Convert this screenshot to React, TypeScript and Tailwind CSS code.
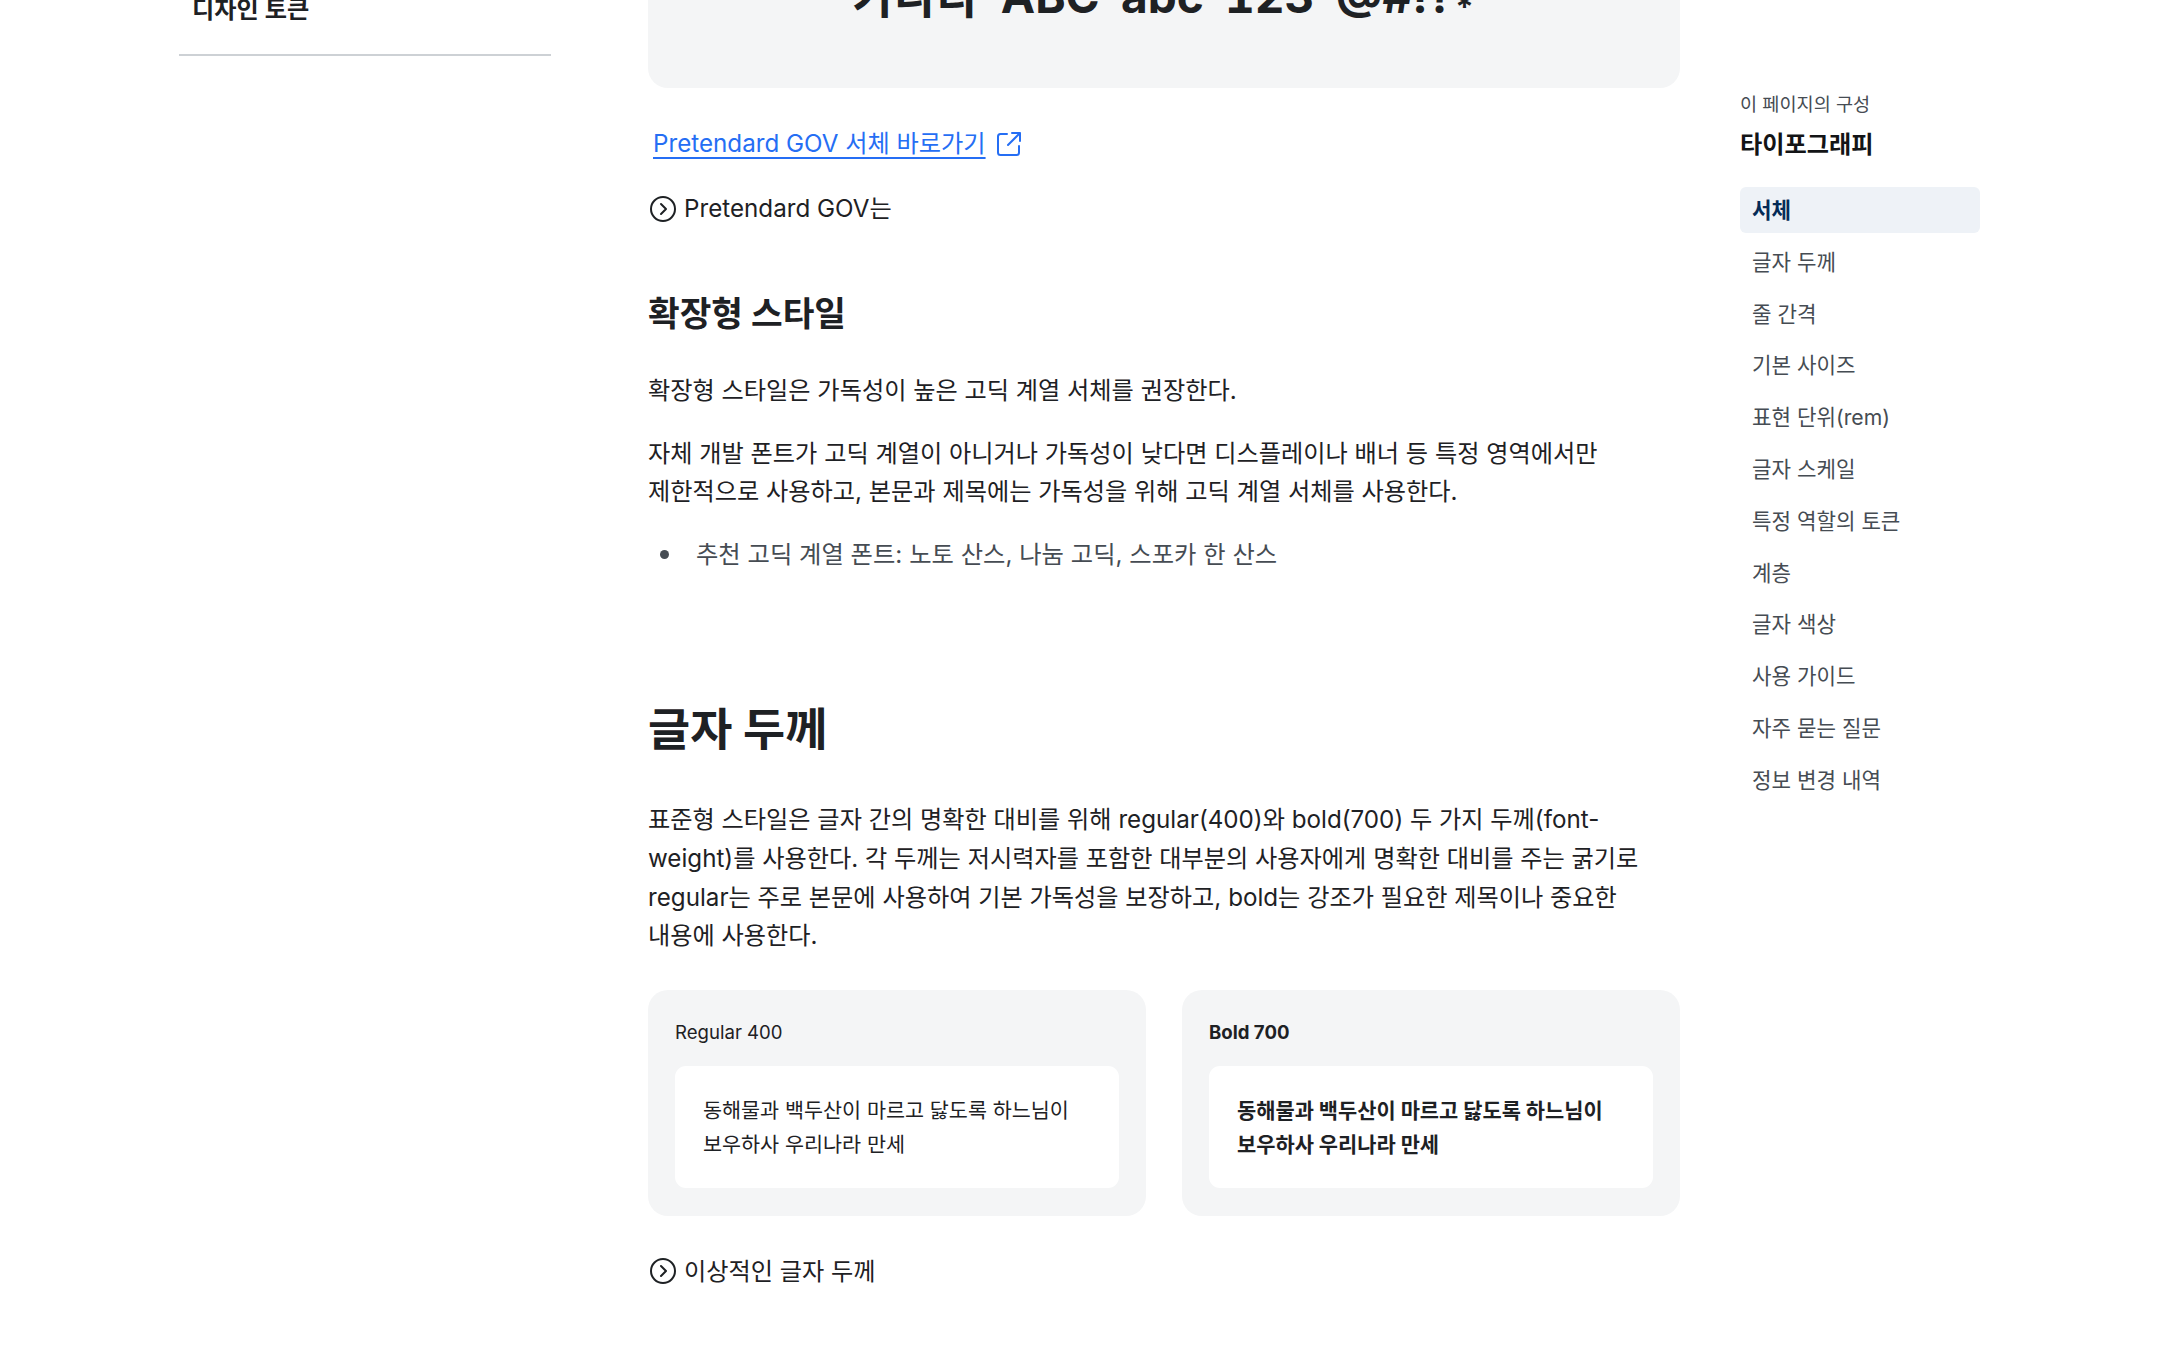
const TOC = ['글자 두께', '줄 간격', '기본 사이즈', '표현 단위(rem)', '글자 스케일', '특정 역할의 토큰', '계층', '글자 색상', '사용 가이드', '자주 묻는 질문', '정보 변경 내역']

const FONT = "font-['Inter','Noto_Sans_CJK_KR',sans-serif]"

function CircleChevron() {
  return (
    <svg width="28" height="28" viewBox="0 0 28 28" fill="none" className="shrink-0">
      <circle cx="14" cy="14" r="12" stroke="#1e2124" strokeWidth="2" />
      <path d="M12 9l5 5-5 5" stroke="#1e2124" strokeWidth="2" strokeLinecap="round" strokeLinejoin="round" />
    </svg>
  )
}

function Disclosure({ label }: { label: string }) {
  return (
    <div className="flex items-center gap-[7px] pl-[1px] h-[39px] text-[24.2px] text-[#1e2124]">
      <CircleChevron />
      <span className="pt-[2px]">{label}</span>
    </div>
  )
}

function WeightCard({ title, bold }: { title: string; bold?: boolean }) {
  return (
    <div className="flex-1 rounded-[20px] bg-[#f4f5f6] p-[27px] pb-[28px]">
      <div className={`text-[18.6px] leading-[30px] h-[49px] text-[#1e2124] ${bold ? 'font-bold' : ''}`}>{title}</div>
      <div className={`rounded-[11px] bg-white px-[28px] pt-[28px] pb-[26px] leading-[34px] text-[#1e2124] break-keep ${bold ? 'text-[20.9px] font-bold' : 'text-[20.7px]'}`}>
        동해물과 백두산이 마르고 닳도록 하느님이 보우하사 우리나라 만세
      </div>
    </div>
  )
}

export default function App() {
  return (
    <div className={`h-[1350px] overflow-hidden bg-white ${FONT}`}>
      <div className="flex -mt-[20px]">
        {/* left nav */}
        <aside className="ml-[179px] w-[372px] shrink-0">
          <div className="pl-[13px] pt-[12px] pb-[17px] h-[76px] border-b-2 border-[#cdd1d5] text-[24.2px] leading-[36px] font-semibold text-[#1e2124]">
            디자인 토큰
          </div>
        </aside>

        {/* main */}
        <main className="ml-[97px] w-[1032px] shrink-0">
          <div className="h-[118px] rounded-b-[20px] bg-[#f4f5f6] text-center text-[46px] leading-[52px] font-bold text-[#1e2124] tabular-nums -mt-[10px] [word-spacing:9px]">
            가나다 ABC abc 123 @#!?<span className="align-[-6px] text-[34px] leading-none">*</span>
          </div>

          <div className="mt-[38px] flex items-center pl-[5px] h-[36px] text-[24.2px]">
            <a className="text-[#256ef4] underline underline-offset-[5px] decoration-[2px]">Pretendard GOV 서체 바로가기</a>
            <svg width="28" height="28" viewBox="0 0 28 28" fill="none" stroke="#256ef4" strokeWidth="2" className="ml-[9px]" strokeLinecap="round" strokeLinejoin="round">
              <path d="M12 4H5.5A2.5 2.5 0 0 0 3 6.5v16A2.5 2.5 0 0 0 5.5 25h16a2.5 2.5 0 0 0 2.5-2.5V16" />
              <path d="M17 3h8v8M25 3L13 15" />
            </svg>
          </div>

          <div className="mt-[27px]"><Disclosure label="Pretendard GOV는" /></div>

          <h3 className="mt-[63px] text-[34.4px] leading-[46px] font-bold text-[#1e2124]">확장형 스타일</h3>
          <p className="mt-[35px] text-[24.2px] leading-[38.6px] text-[#1e2124] break-keep">확장형 스타일은 가독성이 높은 고딕 계열 서체를 권장한다.</p>
          <p className="mt-[24px] pr-[30px] text-[24.2px] leading-[38.6px] text-[#1e2124] break-keep">
            자체 개발 폰트가 고딕 계열이 아니거나 가독성이 낮다면 디스플레이나 배너 등 특정 영역에서만 제한적으로 사용하고, 본문과 제목에는 가독성을 위해 고딕 계열 서체를 사용한다.
          </p>
          <ul className="mt-[23px]">
            <li className="flex items-center text-[24.3px] leading-[38.6px] text-[#464c53]">
              <span className="ml-[12px] mr-[27px] size-[9px] rounded-full bg-[#464c53]" />
              추천 고딕 계열 폰트: 노토 산스, 나눔 고딕, 스포카 한 산스
            </li>
          </ul>

          <h2 className="mt-[126px] text-[45.8px] leading-[62px] font-bold text-[#1e2124]">글자 두께</h2>
          <p className="mt-[40px] pr-[30px] text-[24.2px] leading-[38.6px] text-[#1e2124] break-keep">
            표준형 스타일은 글자 간의 명확한 대비를 위해 regular(400)와 bold(700) 두 가지 두께(font-weight)를 사용한다. 각 두께는 저시력자를 포함한 대부분의 사용자에게 명확한 대비를 주는 굵기로 regular는 주로 본문에 사용하여 기본 가독성을 보장하고, bold는 강조가 필요한 제목이나 중요한 내용에 사용한다.
          </p>

          <div className="mt-[34px] flex gap-[36px]">
            <WeightCard title="Regular 400" />
            <WeightCard title="Bold 700" bold />
          </div>

          <div className="mt-[36px]"><Disclosure label="이상적인 글자 두께" /></div>
        </main>

        {/* page toc */}
        <nav className="ml-[60px] w-[240px] shrink-0 pt-[110px]">
          <div className="text-[18.6px] leading-[28px] text-[#464c53]">이 페이지의 구성</div>
          <div className="mt-[9px] text-[24.2px] leading-[36px] font-bold text-[#131416]">타이포그래피</div>
          <ul className="mt-[24px]">
            <li className="h-[46px] rounded-[6px] bg-[#eef2f7] px-[12px] text-[21.2px] leading-[46px] font-bold text-[#052b57]">서체</li>
            {TOC.map(item => (
              <li key={item} className="mt-[5.8px] h-[46px] px-[12px] text-[21.2px] leading-[46px] text-[#464c53]">{item}</li>
            ))}
          </ul>
        </nav>
      </div>
    </div>
  )
}
